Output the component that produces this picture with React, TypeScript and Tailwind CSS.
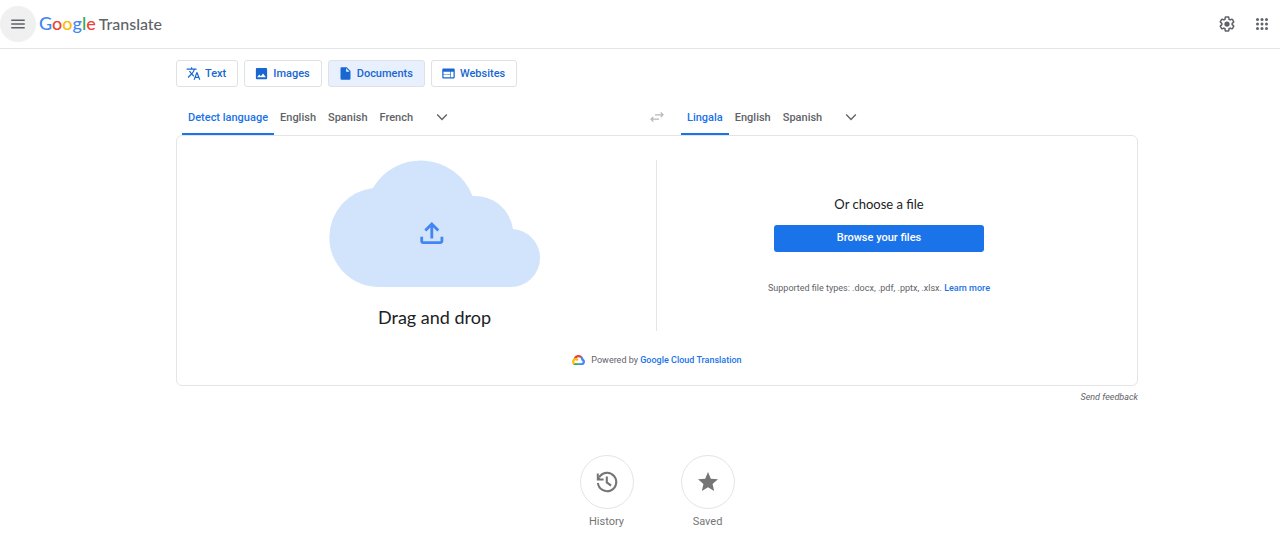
import type { ReactNode } from 'react';
import clsx from 'clsx';
import { MdImage, MdInsertDriveFile, MdMenu, MdStar, MdTranslate, MdWeb } from 'react-icons/md';

const modes = [
  { label: 'Text', icon: MdTranslate },
  { label: 'Images', icon: MdImage },
  { label: 'Documents', icon: MdInsertDriveFile, active: true },
  { label: 'Websites', icon: MdWeb },
];

const logoLetters = [
  { char: 'G', color: 'text-[#4285f4]' },
  { char: 'o', color: 'text-[#ea4335]' },
  { char: 'o', color: 'text-[#fbbc05]' },
  { char: 'g', color: 'text-[#4285f4]' },
  { char: 'l', color: 'text-[#34a853]' },
  { char: 'e', color: 'text-[#ea4335]' },
];

function SettingsIcon() {
  return (
    <svg viewBox="0 0 24 24" className="size-[18px]" fill="currentColor" aria-hidden="true">
      <path d="M13.85 22.25h-3.7c-.74 0-1.36-.54-1.45-1.27l-.27-1.89c-.27-.14-.53-.29-.79-.46l-1.8.72c-.7.26-1.47-.03-1.81-.65L2.2 15.53c-.35-.66-.2-1.44.36-1.88l1.53-1.19c-.01-.15-.02-.3-.02-.46 0-.15.01-.31.02-.46l-1.52-1.19c-.59-.45-.74-1.26-.37-1.88l1.85-3.19c.34-.62 1.11-.9 1.79-.63l1.81.73c.26-.17.52-.32.78-.46l.27-1.91c.09-.7.71-1.25 1.44-1.25h3.7c.74 0 1.36.54 1.45 1.27l.27 1.89c.27.14.53.29.79.46l1.8-.72c.71-.26 1.48.03 1.82.65l1.84 3.18c.36.66.2 1.44-.36 1.88l-1.52 1.19c.01.15.02.3.02.46s-.01.31-.02.46l1.52 1.19c.56.45.72 1.23.37 1.86l-1.86 3.22c-.34.62-1.11.9-1.8.63l-1.8-.72c-.26.17-.52.32-.78.46l-.27 1.91c-.1.68-.72 1.22-1.46 1.22zm-3.23-2h2.76l.37-2.55.53-.22c.44-.18.88-.44 1.34-.78l.45-.34 2.38.96 1.38-2.4-2.03-1.58.07-.56c.03-.26.06-.51.06-.78s-.03-.53-.06-.78l-.07-.56 2.03-1.58-1.39-2.4-2.39.96-.45-.35c-.42-.32-.87-.58-1.33-.77l-.52-.22-.37-2.55h-2.76l-.37 2.55-.53.21c-.44.19-.88.44-1.34.79l-.45.33-2.38-.95-1.39 2.39 2.03 1.58-.07.56a7 7 0 0 0-.06.79c0 .26.02.53.06.78l.07.56-2.03 1.58 1.38 2.4 2.39-.96.45.35c.43.33.86.58 1.33.77l.53.22.38 2.55z" />
      <circle cx="12" cy="12" r="3.5" />
    </svg>
  );
}

function AppsIcon() {
  return (
    <svg viewBox="0 0 24 24" className="size-[18px]" fill="currentColor" aria-hidden="true">
      {[6, 12, 18].map((y) => [6, 12, 18].map((x) => <circle key={`${x}-${y}`} cx={x} cy={y} r="2" />))}
    </svg>
  );
}

function ChevronIcon() {
  return (
    <svg viewBox="0 0 12 12" className="size-3" fill="none" stroke="currentColor" strokeWidth="1.4" aria-hidden="true">
      <path d="M1.2 3.6 6 8.4l4.8-4.8" />
    </svg>
  );
}

function SwapIcon() {
  return (
    <svg viewBox="0 0 14 12" className="h-3 w-3.5" fill="none" stroke="currentColor" strokeWidth="1.2" aria-hidden="true">
      <path d="M5 3.8h8M10.7 1.4 13 3.8l-2.3 2.4M9 8.2H1M3.3 5.8 1 8.2l2.3 2.4" />
    </svg>
  );
}

function HistoryIcon() {
  return (
    <svg viewBox="0 0 24 24" className="size-6" fill="none" stroke="currentColor" strokeWidth="2.1" aria-hidden="true">
      <path d="M2.9 13A9.200 9.200 0 1 0 4.200 7.200" />
      <path d="M11.800 6.400v6l4.300 3.300" />
      <path d="M1.800 3.600v6.800h6.800v-2H5.200L3.800 6.800V3.600z" fill="currentColor" stroke="none" />
    </svg>
  );
}

function UploadCloud() {
  return (
    <svg viewBox="0 0 211 127" className="h-[127px] w-[211px]" fill="none" aria-hidden="true">
      <path
        d="M44 28A49.700 49.700 0 0 0 .3 77.300A49.700 49.700 0 0 0 50 127H182A29 29 0 0 0 211 98A29 29 0 0 0 184 69A38.500 38.500 0 0 0 143.500 36A55.400 55.400 0 0 0 44 28Z"
        fill="#d2e3fc"
      />
      <g stroke="#4285f4" strokeWidth="2.800">
        <path d="M102.800 78.500V64.500M96.300 70.500l6.500-6.500 6.500 6.500" />
        <path d="M92.700 76.800v4.200a1.600 1.600 0 0 0 1.600 1.600h17a1.600 1.600 0 0 0 1.600-1.600v-4.200" />
      </g>
    </svg>
  );
}

function CloudLogo() {
  return (
    <svg viewBox="0 0 256 206" className="w-[13px]" aria-hidden="true">
      <path fill="#ea4335" d="M170.252 56.819l22.253-22.253 1.483-9.37C153.437-11.677 88.976-7.496 52.42 33.92 42.267 45.423 34.734 59.764 30.717 74.573l7.97-1.123 44.505-7.34 3.436-3.513c19.797-21.742 53.27-24.667 76.128-6.168l7.496.39z" />
      <path fill="#4285f4" d="M224.205 73.918a100.249 100.249 0 0 0-30.217-48.722l-31.232 31.232a55.515 55.515 0 0 1 20.379 44.037v5.544c15.35 0 27.797 12.445 27.797 27.796 0 15.352-12.446 27.485-27.797 27.485h-55.671l-5.466 5.934v33.34l5.466 5.231h55.67c39.93.311 72.553-31.494 72.864-71.424a72.303 72.303 0 0 0-31.793-60.453" />
      <path fill="#34a853" d="M71.87 205.796h55.593V161.29H71.87a27.275 27.275 0 0 1-11.47-2.499l-7.887 2.42-22.409 22.253-1.952 7.574c12.567 9.489 27.9 14.825 43.647 14.757" />
      <path fill="#fbbc05" d="M71.87 61.425C31.94 61.664-.237 94.228.001 134.158a72.301 72.301 0 0 0 28.222 56.88l32.248-32.246c-13.99-6.322-20.208-22.786-13.887-36.776 6.32-13.99 22.786-20.208 36.775-13.888a27.796 27.796 0 0 1 13.887 13.888l32.248-32.248A72.224 72.224 0 0 0 71.87 61.425" />
    </svg>
  );
}

function LanguageTabs({ label, languages }: { label: string; languages: string[] }) {
  return (
    <div className="flex items-stretch px-1.5">
      <div role="tablist" aria-label={label} className="flex">
        {languages.map((language, index) => (
          <button
            key={language}
            type="button"
            role="tab"
            aria-selected={index === 0}
            className={clsx(
              'border-b-2 px-1.5 pt-1 font-medium whitespace-nowrap',
              index === 0 ? 'border-[#1a73e8] text-[#1a73e8]' : 'border-transparent text-[#5f6368]',
            )}
          >
            {language}
          </button>
        ))}
      </div>
      <button type="button" aria-label="More languages" className="ml-[5px] flex w-9 items-center justify-center text-[#5f6368]">
        <ChevronIcon />
      </button>
    </div>
  );
}

function RoundAction({ label, children }: { label: string; children: ReactNode }) {
  return (
    <button type="button" className="flex w-[54px] flex-col items-center gap-[5px] text-[11px] leading-4 text-[#757575]">
      <span className="flex size-[54px] items-center justify-center rounded-full border border-[#e4e4e4]">{children}</span>
      {label}
    </button>
  );
}

export default function App() {
  return (
    <div className="bg-white font-['Roboto',sans-serif] text-[11px] text-[#202124]">
      <header className="flex h-[49px] items-center border-b border-[#e4e5e7] pr-px text-[#5f6368]">
        <button type="button" aria-label="Main menu" className="flex size-9 items-center justify-center rounded-full bg-[#f0f0f0]">
          <MdMenu className="size-[18px]" />
        </button>
        <a href="#" className="ml-[3px] flex items-baseline gap-[3px] pb-0.5 font-['Lato',sans-serif] font-medium">
          <span className="text-lg leading-6">
            {logoLetters.map(({ char, color }, index) => (
              <span key={index} className={color}>{char}</span>
            ))}
          </span>
          <span className="text-base leading-6">Translate</span>
        </a>
        <div className="ml-auto flex">
          <button type="button" aria-label="Settings" className="flex size-[35px] items-center justify-center">
            <SettingsIcon />
          </button>
          <button type="button" aria-label="Google apps" className="flex size-[35px] items-center justify-center">
            <AppsIcon />
          </button>
        </div>
      </header>

      <main className="pt-[11px] pl-[34px]">
        <div className="mx-auto max-w-[962px]">
          <nav aria-label="Translation types" className="flex gap-1.5">
            {modes.map(({ label, icon: Icon, active }) => (
              <button
                key={label}
                type="button"
                aria-pressed={!!active}
                className={clsx(
                  'flex h-[27px] items-center gap-1 rounded-[3px] border border-[#dfe1e5] pr-[11px] pl-[9px] font-medium text-[#1967d2]',
                  active && 'bg-[#e8f0fe]',
                )}
              >
                <Icon className="size-[15px]" />
                <span className="pt-px leading-4">{label}</span>
              </button>
            ))}
          </nav>

          <div className="mt-3 grid h-9 grid-cols-[1fr_36px_1fr]">
            <LanguageTabs label="Source language" languages={['Detect language', 'English', 'Spanish', 'French']} />
            <button type="button" aria-label="Swap languages" className="flex items-center justify-center text-[#b4b6b8]">
              <SwapIcon />
            </button>
            <LanguageTabs label="Target language" languages={['Lingala', 'English', 'Spanish']} />
          </div>

          <section className="rounded-md border border-[#e4e5e7] px-9 pt-6 pb-[17px]">
            <div className="grid grid-cols-2">
              <div className="flex flex-col items-center border-r border-[#e4e5e7]">
                <UploadCloud />
                <h2 className="mt-4 font-['Lato',sans-serif] text-lg leading-7">Drag and drop</h2>
              </div>
              <div className="flex flex-col items-center justify-center pb-0.5">
                <h2 className="font-['Lato',sans-serif] text-[13px] leading-5">Or choose a file</h2>
                <button type="button" className="mt-[11px] h-[27px] w-[210px] rounded-[3px] bg-[#1a73e8] pt-px font-medium text-white">
                  Browse your files
                </button>
                <p className="mt-7 text-[9px] leading-4 text-[#5f6368]">
                  Supported file types: .docx, .pdf, .pptx, .xlsx.{' '}
                  <a href="#" className="font-medium text-[#1a73e8]">Learn more</a>
                </p>
              </div>
            </div>
            <div className="mt-[21px] flex items-center justify-center gap-1.5 text-[9px] leading-4 text-[#5f6368]">
              <CloudLogo />
              <p>
                Powered by <a href="#" className="font-medium text-[#1a73e8]">Google Cloud Translation</a>
              </p>
            </div>
          </section>

          <div className="mt-[3px] flex justify-end">
            <button type="button" className="text-[9px] leading-4 text-[#5f6368] italic">Send feedback</button>
          </div>
        </div>

        <div className="mt-[50px] flex justify-center gap-[47px]">
          <RoundAction label="History">
            <HistoryIcon />
          </RoundAction>
          <RoundAction label="Saved">
            <MdStar className="size-6" />
          </RoundAction>
        </div>
      </main>
    </div>
  );
}
